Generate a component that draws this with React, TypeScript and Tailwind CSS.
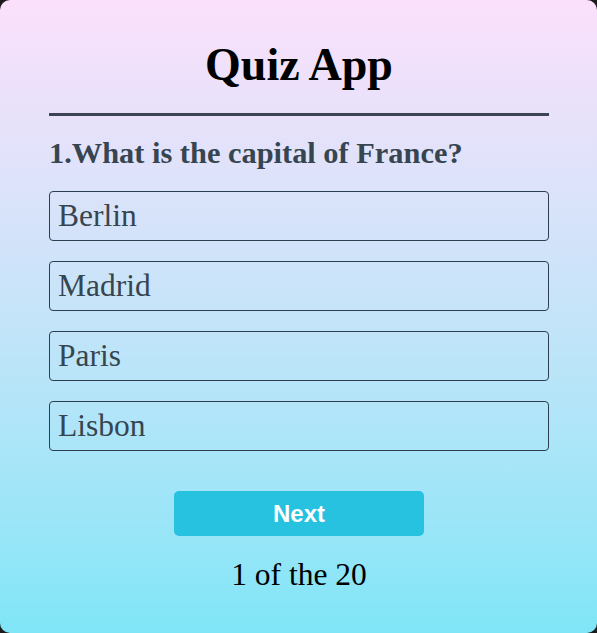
const options = ["Berlin", "Madrid", "Paris", "Lisbon"];

export default function App() {
  return (
    <div className="min-h-screen bg-[#1c1c1c]">
      <div className="h-[633px] w-[597px] rounded-[10px] bg-gradient-to-b from-[#fbe0fb] to-[#7fe6f7] pl-[49px] pr-[48px] pt-[39px] font-['Liberation_Serif',serif]">
        <h1 className="text-center text-[46px] font-bold leading-[52px] text-black">
          Quiz App
        </h1>
        <hr className="mt-[22px] h-[3px] border-0 bg-[#3d4555]" />
        <h2 className="mt-[20px] text-[30.4px] font-bold leading-[34px] text-[#36454f]">
          1.What is the capital of France?
        </h2>
        <ul className="mt-[21px] flex flex-col gap-[20px]">
          {options.map((opt) => (
            <li
              key={opt}
              className="flex h-[50px] items-center rounded-[4px] border border-[#2c3e50] pl-[8px] text-[31.5px] text-[#36454f]"
            >
              {opt}
            </li>
          ))}
        </ul>
        <div className="mt-[40px] flex justify-center">
          <button className="h-[45px] w-[250px] rounded-[5px] bg-[#26c2e0] font-['Liberation_Sans',sans-serif] text-[24px] font-bold text-white">
            Next
          </button>
        </div>
        <p className="mt-[21px] text-center text-[31.5px] leading-[36px] text-black">
          1 of the 20
        </p>
      </div>
    </div>
  );
}
